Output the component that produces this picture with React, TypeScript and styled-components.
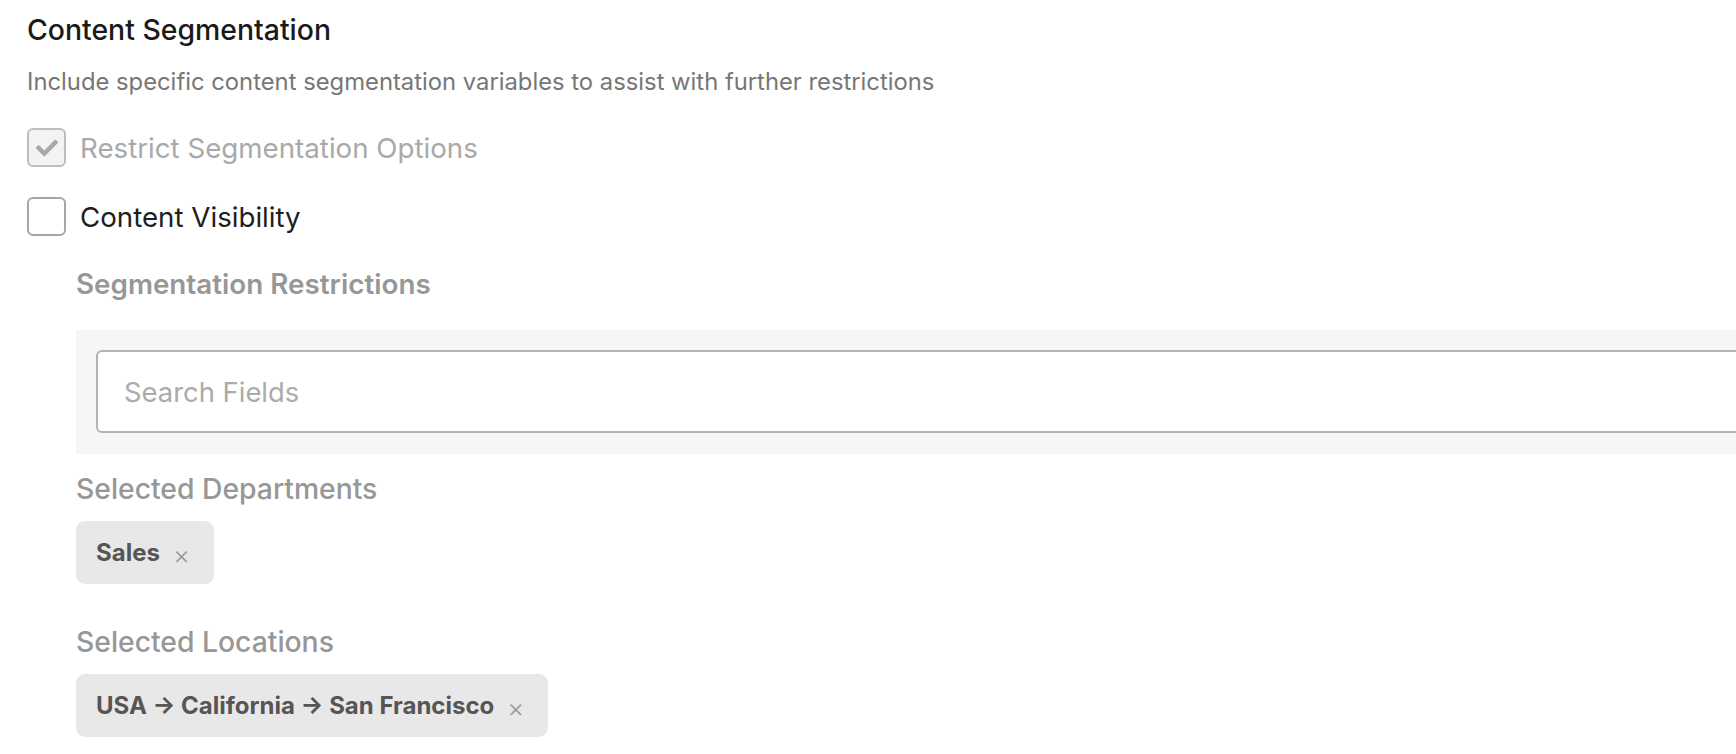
import React from "react";
import styled, { createGlobalStyle } from "styled-components";
import { FaCheck } from "react-icons/fa";

const GlobalStyle = createGlobalStyle`
  html, body {
    margin: 0;
    padding: 0;
    background: #ffffff;
    overflow: hidden;
  }
  body {
    font-family: Inter, "Noto Sans", "Liberation Sans", sans-serif;
    -webkit-font-smoothing: antialiased;
  }
`;

const Page = styled.div`
  padding: 15px 0 0 27px;
  display: flex;
  flex-direction: column;
`;

const Heading = styled.h2`
  margin: 0;
  font-size: 28.4px;
  line-height: 30px;
  font-weight: 500;
  color: #1a1a1a;
`;

const Description = styled.p`
  margin: 23px 0 0;
  font-size: 23.8px;
  line-height: 28px;
  font-weight: 400;
  color: #777777;
`;

const OptionList = styled.div`
  display: flex;
  flex-direction: column;
  gap: 30px;
  margin-top: 32px;
`;

const OptionRow = styled.label<{ $disabled?: boolean }>`
  display: flex;
  align-items: center;
  gap: 14px;
  font-size: 27.7px;
  line-height: 30px;
  color: ${(p) => (p.$disabled ? "#a9a9a9" : "#1e1e1e")};
`;

const Box = styled.span<{ $disabled?: boolean }>`
  box-sizing: border-box;
  width: 39px;
  height: 39px;
  border-radius: 6px;
  border: 2px solid ${(p) => (p.$disabled ? "#bdbdbd" : "#a6a6a6")};
  background: ${(p) => (p.$disabled ? "#f3f3f3" : "#ffffff")};
  display: flex;
  align-items: center;
  justify-content: center;
  color: #a8a8a8;
  flex-shrink: 0;
`;

const Indented = styled.div`
  display: flex;
  flex-direction: column;
  margin: 33px 0 0 49px;
  width: 1800px;
`;

const SectionLabel = styled.div<{ $weight?: number; $size?: number }>`
  font-size: ${(p) => p.$size ?? 28}px;
  line-height: 30px;
  font-weight: ${(p) => p.$weight ?? 600};
  color: #979797;
`;

const SearchPanel = styled.div`
  margin-top: 31px;
  background: #f6f6f6;
  padding: 20px 20px 21px;
`;

const SearchInput = styled.input`
  box-sizing: border-box;
  display: block;
  width: 100%;
  height: 83px;
  border: 2px solid #b3b3b3;
  border-radius: 6px;
  background: #ffffff;
  padding: 0 26px;
  font-family: Inter, "Noto Sans", "Liberation Sans", sans-serif;
  font-size: 27.4px;
  color: #333;
  outline: none;
  &::placeholder {
    color: #ababab;
  }
`;

const Group = styled.div<{ $top: number }>`
  display: flex;
  flex-direction: column;
  align-items: flex-start;
  gap: 17px;
  margin-top: ${(p) => p.$top}px;
`;

const Chip = styled.div`
  display: inline-flex;
  align-items: center;
  gap: 13px;
  height: 63px;
  box-sizing: border-box;
  padding: 0 24px 0 20px;
  background: #e8e8e8;
  border-radius: 9px;
  font-size: 24px;
  font-weight: 700;
  color: #555555;
`;

const Remove = styled.span`
  font-size: 26px;
  font-weight: 300;
  color: #9a9a9a;
  line-height: 1;
  margin-top: 4px;
`;

export default function App() {
  return (
    <>
      <GlobalStyle />
      <Page>
        <Heading>Content Segmentation</Heading>
        <Description>
          Include specific content segmentation variables to assist with further restrictions
        </Description>
        <OptionList>
          <OptionRow $disabled>
            <Box $disabled>
              <FaCheck size={22} />
            </Box>
            Restrict Segmentation Options
          </OptionRow>
          <OptionRow>
            <Box />
            Content Visibility
          </OptionRow>
        </OptionList>
        <Indented>
          <SectionLabel $size={27.8}>Segmentation Restrictions</SectionLabel>
          <SearchPanel>
            <SearchInput placeholder="Search Fields" />
          </SearchPanel>
          <Group $top={20}>
            <SectionLabel $weight={500} $size={28.3}>
              Selected Departments
            </SectionLabel>
            <Chip>
              Sales <Remove>×</Remove>
            </Chip>
          </Group>
          <Group $top={43}>
            <SectionLabel $weight={500} $size={28.3}>
              Selected Locations
            </SectionLabel>
            <Chip>
              USA → California → San Francisco <Remove>×</Remove>
            </Chip>
          </Group>
        </Indented>
      </Page>
    </>
  );
}
